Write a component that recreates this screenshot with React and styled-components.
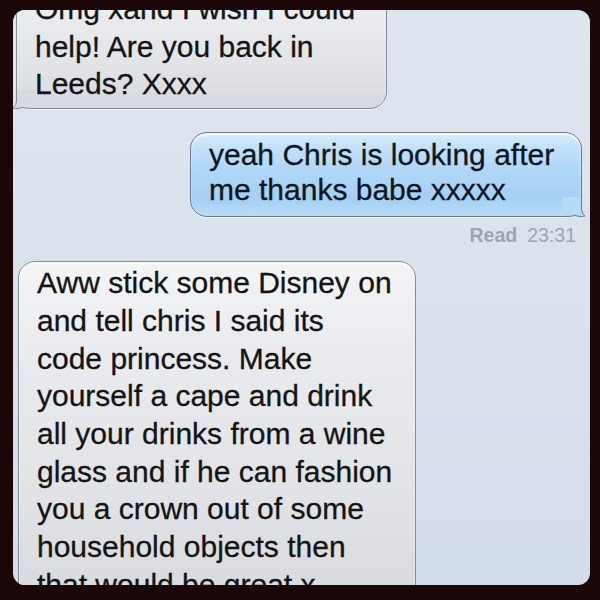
import React from 'react';
import styled, { createGlobalStyle } from 'styled-components';

const Global = createGlobalStyle`
  html, body { margin: 0; padding: 0; background: #1b0608; }
  body { width: 600px; height: 600px; overflow: hidden; font-family: "Liberation Sans", Arial, sans-serif; }
`;

const Frame = styled.div`
  width: 600px;
  height: 600px;
  box-sizing: border-box;
  padding: 10px 10px 15px 13px;
  background: #1b0608;
  display: flex;
`;

const Screen = styled.div`
  flex: 1;
  border-radius: 12px;
  overflow: hidden;
  background: linear-gradient(180deg, #dee5ee 0%, #d9e1ec 55%, #d3dce9 100%);
`;

const Thread = styled.div`
  display: flex;
  flex-direction: column;
  align-items: flex-start;
  margin-top: -24px;
`;

const Received = styled.div`
  position: relative;
  box-sizing: border-box;
  width: ${p => p.$w}px;
  margin-left: ${p => p.$ml}px;
  margin-top: ${p => p.$mt || 0}px;
  padding: ${p => p.$pt}px 12px 5px 18px;
  border: 1px solid #878b93;
  border-radius: 17px;
  background: linear-gradient(180deg, #f3f4f6 0%, #eaebee 25%, #e1e3e7 65%, #d7d9de 100%);
  box-shadow: inset 0 2px 2px rgba(255, 255, 255, 0.95), 0 1px 0 rgba(255, 255, 255, 0.7);
  font-size: 30px;
  line-height: 37.7px;
  color: #141414;
  -webkit-text-stroke: 0.3px #141414;
  white-space: nowrap;
`;

const Sent = styled.div`
  position: relative;
  box-sizing: border-box;
  align-self: flex-end;
  width: 392px;
  margin: 23px 8px 0 0;
  padding: 4px 12px 9px 18px;
  border: 1px solid #677a90;
  border-radius: 17px;
  background: linear-gradient(180deg, #d8ecfc 0%, #c2e1fa 18%, #afd6f6 45%, #a4d0f4 80%, #b9ddf8 100%);
  box-shadow: inset 0 2px 2px rgba(255, 255, 255, 0.85), 0 1px 0 rgba(255, 255, 255, 0.7);
  font-size: 30px;
  line-height: 35px;
  color: #0f1622;
  -webkit-text-stroke: 0.3px #0f1622;
  white-space: nowrap;
`;

const Line = styled.div``;

const Tail = styled.svg`
  position: absolute;
  bottom: -1px;
  ${p => (p.$side === 'right' ? 'right: -5px; transform: scaleX(-1);' : 'left: -5px;')}
  width: 24px;
  height: 20px;
  overflow: visible;
`;

const Status = styled.div`
  align-self: flex-end;
  margin: 7px 14px 0 0;
  display: flex;
  gap: 10px;
  font-size: 19.5px;
  line-height: 22px;
  color: #9ba5b4;
`;

const StatusLabel = styled.span`
  font-weight: bold;
`;

const StatusTime = styled.span`
  font-weight: normal;
`;

function BubbleTail({ side, fill, stroke }) {
  return (
    <Tail $side={side} viewBox="0 0 24 20">
      <path
        d="M4.5 0 L4.5 11 C4.5 15 3 17.5 0.8 19 C4 19.8 8 19.6 11 18.2 C13.5 19.3 16 19.5 24 19.5 L24 0 Z"
        fill={fill}
      />
      <path
        d="M4.5 0 L4.5 11 C4.5 15 3 17.5 0.8 19 C4 19.8 8 19.6 11 18.2 C13.5 19.3 16 19.5 24 19.5"
        fill="none"
        stroke={stroke}
        strokeWidth="1"
      />
    </Tail>
  );
}

export default function App() {
  return (
    <>
      <Global />
      <Frame>
        <Screen>
          <Thread>
            <Received $w={371} $ml={3} $pt={3}>
              <Line>Omg xand I wish I could</Line>
              <Line>help! Are you back in</Line>
              <Line>Leeds? Xxxx</Line>
              <BubbleTail side="left" fill="#d8dadf" stroke="#878b93" />
            </Received>
            <Sent>
              <Line>yeah Chris is looking after</Line>
              <Line>me thanks babe xxxxx</Line>
              <BubbleTail side="right" fill="#b6dbf7" stroke="#677a90" />
            </Sent>
            <Status>
              <StatusLabel>Read</StatusLabel>
              <StatusTime>23:31</StatusTime>
            </Status>
            <Received $w={398} $ml={5} $pt={2} $mt={15}>
              <Line>Aww stick some Disney on</Line>
              <Line>and tell chris I said its</Line>
              <Line>code princess. Make</Line>
              <Line>yourself a cape and drink</Line>
              <Line>all your drinks from a wine</Line>
              <Line>glass and if he can fashion</Line>
              <Line>you a crown out of some</Line>
              <Line>household objects then</Line>
              <Line>that would be great x</Line>
            </Received>
          </Thread>
        </Screen>
      </Frame>
    </>
  );
}
